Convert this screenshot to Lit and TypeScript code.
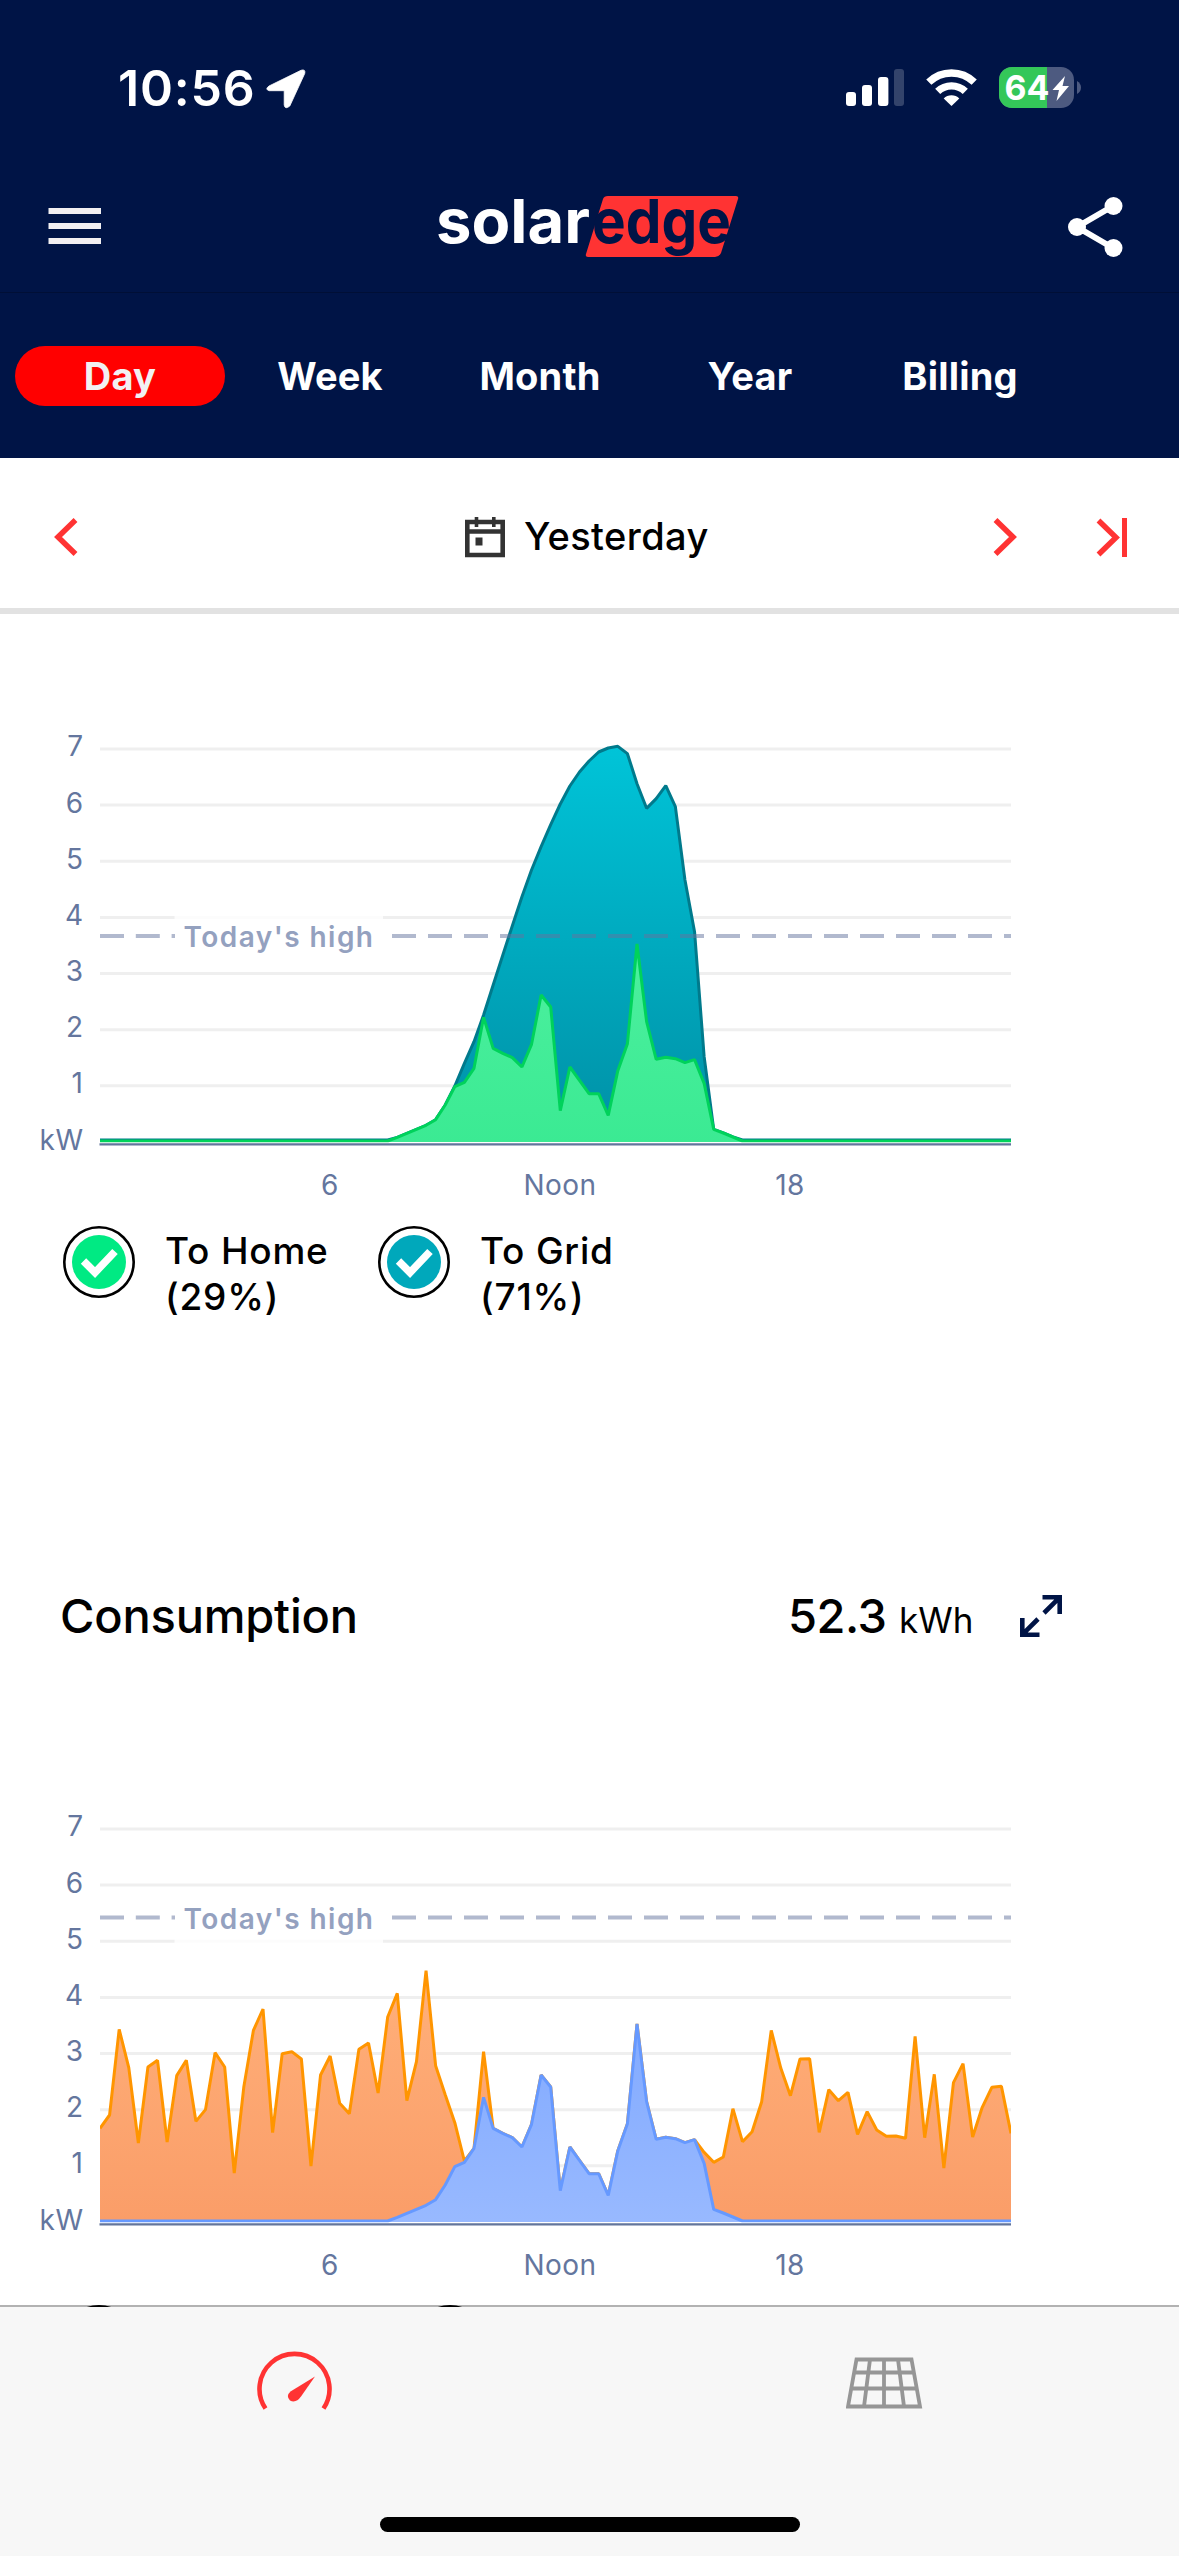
import { LitElement, html, svg, css } from "lit";
import { customElement, property } from "lit/decorators.js";

/* Quarter-hour readings, 96 per day. 168.4 counts are 1 kW. */
const COUNTS_PER_PX = 3;
const SAMPLES = 96;

const pad = (start: number, values: number[], idle: number): number[] => {
  const out = new Array<number>(SAMPLES).fill(idle);
  values.forEach((v, i) => (out[start + i] = v));
  return out;
};

const SELF_USE = pad(30, [
  3, 14, 26, 38, 50, 67, 111, 166, 179, 221, 374, 281, 266, 253, 225, 293, 441, 405, 94, 225, 185, 145, 145, 80,
  214, 295, 594, 361, 248, 254, 250, 238, 247, 176, 38, 27, 15, 3,
], 3);

const PRODUCTION = pad(30, [
  6, 14, 26, 38, 50, 67, 111, 168, 236, 301, 381, 471, 560, 649, 736, 816, 886, 952, 1014, 1068, 1110, 1143, 1170,
  1182, 1187, 1165, 1075, 1001, 1030, 1069, 1006, 786, 631, 256, 38, 27, 15, 6,
], 6);

const CONSUMPTION = [
  281, 321, 578, 463, 237, 465, 485, 240, 439, 485, 302, 337, 508, 465, 147, 406, 575, 639, 268, 505, 511, 489, 168,
  441, 498, 356, 325, 518, 537, 387, 615, 686, 364, 481, 754, 469, 382, 298, 183, 221, 511,
  ...SELF_USE.slice(41, 63),
  209, 179, 195, 340, 241, 271, 361, 575, 461, 379, 489, 490, 269, 397, 364, 389, 263, 331, 276, 257, 258, 251, 557,
  253, 443, 162, 418, 475, 255, 344, 404, 407, 266,
];

interface Series {
  id: string;
  values: number[];
  stroke: string;
  top: string;
  bottom: string;
}

/* Chart canvas: 1040 x 492, zero line at y = 422 and the 7 kW line at y = 29. */
const LEFT = 100;
const RIGHT = 1011;
const ZERO = 422;
const KW = 56.15;

@customElement("power-chart")
export class PowerChart extends LitElement {
  @property({ attribute: false }) series: Series[] = [];
  @property({ type: Number }) high = 0;

  static styles = css`
    :host { display: block; height: 492px; }
    .canvas { display: block; }
    .axis { font: 400 28px Inter, "Liberation Sans", sans-serif; fill: #64769e; letter-spacing: 0.5px; }
    .high { font: 600 28px Inter, "Liberation Sans", sans-serif; fill: #94a1bf; }
  `;

  private line(values: number[]) {
    const step = (RIGHT - LEFT) / (SAMPLES - 1);
    return values
      .map((v, i) => `${(LEFT + i * step).toFixed(2)},${(ZERO - v / COUNTS_PER_PX).toFixed(2)}`)
      .join(" ");
  }

  render() {
    const rows = [0, 1, 2, 3, 4, 5, 6, 7];
    const hours: [number, string][] = [[330, "6"], [560, "Noon"], [790, "18"]];
    const y = this.high;
    return html`
      <svg class="canvas" width="1040" height="492" viewBox="0 0 1040 492">
        <defs>
          <clipPath id="plot"><rect x="100" y="0" width="911" height="422.4"></rect></clipPath>
          ${this.series.map(
            (s) => svg`<linearGradient id=${s.id} x1="0" y1="0" x2="0" y2="1">
              <stop offset="0" stop-color=${s.top}></stop><stop offset="1" stop-color=${s.bottom}></stop>
            </linearGradient>`,
          )}
        </defs>
        ${rows.slice(1).map(
          (n) => svg`<line x1="100" x2="1011" y1=${ZERO - n * KW} y2=${ZERO - n * KW} stroke="#efefef" stroke-width="3"></line>`,
        )}
        <g clip-path="url(#plot)">
          ${this.series.map(
            (s) => svg`
              <polygon points="100,422 ${this.line(s.values)} 1011,422" fill="url(#${s.id})"></polygon>
              <polyline points=${this.line(s.values)} fill="none" stroke=${s.stroke} stroke-width="3" stroke-linejoin="bevel"></polyline>`,
          )}
        </g>
        <line x1="99.5" x2="1011" y1="424.3" y2="424.3" stroke="#62759c" stroke-width="2.2"></line>
        <rect x="174.5" y=${y - 22} width="208.5" height="50" fill="#fff" opacity="0.8"></rect>
        <g stroke="#64749e" stroke-opacity="0.5" stroke-width="4">
          <line x1="100" x2="175" y1=${y} y2=${y} stroke-dasharray="24 11.8"></line>
          <line x1="392" x2="1011" y1=${y} y2=${y} stroke-dasharray="24 12"></line>
        </g>
        <text class="high" x="183.5" y=${y + 11} textLength="189.5">Today's high</text>
        ${rows.map(
          (n) => svg`<text class="axis" x="83.5" y=${ZERO - n * KW + 7.5} text-anchor="end">${n === 0 ? "kW" : n}</text>`,
        )}
        ${hours.map(([x, label]) => svg`<text class="axis" x=${x} y="475" text-anchor="middle">${label}</text>`)}
      </svg>
    `;
  }
}

@customElement("legend-item")
export class LegendItem extends LitElement {
  @property() name = "";
  @property() share = "";
  @property() color = "";

  static styles = css`
    :host { display: flex; gap: 30px; height: 96px; color: #000; }
    .mark { flex: none; display: block; }
    .label { font: 500 37px/46px Inter, "Liberation Sans", sans-serif; padding-top: 2px; letter-spacing: 0.8px; white-space: nowrap; }
  `;

  render() {
    return html`
      <svg class="mark" width="72" height="72" viewBox="0 0 72 72">
        <circle cx="36" cy="36" r="34.7" fill="#fff" stroke="#000" stroke-width="2.6"></circle>
        <circle cx="36" cy="36" r="27" fill=${this.color}></circle>
        <path d="M20.5 35 L32 46.5 L52 25.5" fill="none" stroke="#fff" stroke-width="7.6"></path>
      </svg>
      <div class="label"><div>${this.name}</div><div>${this.share}</div></div>
    `;
  }
}

@customElement("app-root")
export class AppRoot extends LitElement {
  static styles = css`
    :host {
      display: flex; flex-direction: column; width: 1179px; height: 2556px; overflow: hidden;
      background: #fff; color: #000; font-family: Inter, "Liberation Sans", sans-serif;
    }
    svg { display: block; flex: none; }
    .top { background: #001446; color: #fff; height: 458px; flex: none; }
    .status { display: flex; height: 176px; box-sizing: border-box; padding: 58px 97px 0 118px; align-items: flex-start; }
    .clock { font: 600 50px/60px Inter, sans-serif; letter-spacing: 0.8px; width: 148px; }
    .arrow { margin-top: 11px; }
    .spacer { flex: 1; }
    .signal { margin: 11px 22px 0 0; }
    .wifi { margin: 11px 22px 0 0; }
    .battery { margin-top: 9px; }
    .cell { font: 700 34px Inter, sans-serif; fill: #fff; }
    .brand { display: flex; align-items: center; justify-content: space-between; height: 117px; box-sizing: border-box; padding: 0 56px 14px 48px; border-bottom: 1px solid #000f36; }
    .menu { margin-bottom: 2px; }
    .logo { margin: -14px -5px -14px 2px; }
    .wordmark { font: 700 61px Inter, sans-serif; }
    .tabs { display: flex; padding: 53px 0 0 15px; }
    .tab { width: 210px; height: 60px; border-radius: 30px; font: 700 38px/61px Inter, sans-serif; text-align: center; letter-spacing: 0.2px; }
    .tab.active { background: #f00; color: #f2f0f2; }
    .period { display: flex; align-items: center; height: 156px; box-sizing: border-box; border-bottom: 6px solid #e2e2e2; padding: 8px 52px 0 54px; flex: none; }
    .period .title { font: 500 38px/46px Inter, sans-serif; letter-spacing: 0.4px; margin-left: 19px; width: 471px; padding-bottom: 2px; }
    .back { margin-right: 387px; }
    .next { margin-right: 79px; }
    .content { flex: 1; min-height: 0; overflow: hidden; display: flex; flex-direction: column; }
    .first { margin-top: 106px; flex: none; }
    .legend { display: flex; padding-left: 63px; margin-top: 14px; flex: none; }
    .legend legend-item { width: 315px; }
    .legend.wide { margin-top: 13px; }
    .legend.wide legend-item { width: 351px; }
    .summary { display: flex; align-items: baseline; margin-top: 264px; padding: 0 0 0 60px; height: 60px; line-height: 60px; flex: none; }
    .heading { font-size: 47px; font-weight: 500; letter-spacing: -0.2px; width: 728px; }
    .amount { font-size: 47px; font-weight: 500; width: 111px; letter-spacing: -0.5px; }
    .unit { font-size: 35px; width: 121px; }
    .expand { align-self: flex-start; margin-top: 9px; }
    .second { margin-top: 154px; flex: none; }
    .tabbar { position: relative; flex: none; height: 251px; margin-top: -2px; box-sizing: border-box; background: #f7f7f7; border-top: 2px solid rgba(0, 0, 0, 0.3); background-clip: padding-box; display: flex; flex-direction: column; align-items: center; }
    .items { display: flex; width: 100%; height: 210px; }
    .items svg { margin-top: 43px; }
    .item { flex: 1; display: flex; justify-content: center; }
    .home { width: 420px; height: 15px; border-radius: 8px; background: #000; flex: none; }
  `;

  private produced: Series[] = [
    { id: "grid", values: PRODUCTION, stroke: "#007a8c", top: "#00c4d8", bottom: "#0090a6" },
    { id: "home", values: SELF_USE, stroke: "#00d25b", top: "#4df09f", bottom: "#3bea93" },
  ];

  private used: Series[] = [
    { id: "import", values: CONSUMPTION, stroke: "#ff9500", top: "#ffb07a", bottom: "#fa9d68" },
    { id: "solar", values: SELF_USE, stroke: "#6699ff", top: "#82aaff", bottom: "#98b9ff" },
  ];

  render() {
    const tabs = ["Day", "Week", "Month", "Year", "Billing"];
    return html`
      <header class="top">
        <div class="status">
          <div class="clock">10:56</div>
          <svg class="arrow" width="40" height="40" viewBox="0 0 40 40">
            <path d="M3 17 L35 1.3 Q39.8 -.2 38.7 4.6 L23.8 37 Q19 41 18.2 36 V21.7 H3.2 Q-1.5 20.5 3 17Z" fill="#fff" stroke="#fff" stroke-width=".8"></path>
          </svg>
          <div class="spacer"></div>
          <svg class="signal" width="58" height="37" viewBox="0 0 58 37" fill="#fff">
            <rect x="0" y="23" width="10" height="14" rx="3"></rect>
            <rect x="16" y="16" width="10" height="21" rx="3"></rect>
            <rect x="32" y="8" width="10.4" height="29" rx="3"></rect>
            <rect x="48" y="0" width="10" height="37" rx="3" opacity=".2"></rect>
          </svg>
          <svg class="wifi" width="51" height="37" viewBox="0 0 51 37" fill="none" stroke="#fff" stroke-width="7.4">
            <path d="M2.8 13.2 A32.5 32.5 0 0 1 48.2 13.2"></path>
            <path d="M11.7 22.4 A20 20 0 0 1 39.3 22.4"></path>
            <path d="M25.5 37 L17.7 29.4 A11 11 0 0 1 33.3 29.4Z" fill="#fff" stroke="none"></path>
          </svg>
          <svg class="battery" width="83" height="41" viewBox="0 0 83 41">
            <defs><clipPath id="cell"><rect width="75" height="41" rx="13"></rect></clipPath></defs>
            <g clip-path="url(#cell)"><rect width="75" height="41" fill="#4d5a80"></rect><rect width="48" height="41" fill="#34c759"></rect></g>
            <path d="M78 14 Q82 16.5 82 20.5 Q82 24.5 78 27Z" fill="#4d5a80"></path>
            <text class="cell" x="5.5" y="32.6" textLength="45" lengthAdjust="spacingAndGlyphs">64</text>
            <path d="M66 9 L53.5 23 H60 L57.5 34 L70 19 H63.5Z" fill="#fff"></path>
          </svg>
        </div>
        <div class="brand">
          <svg class="menu" width="53" height="36" viewBox="0 0 53 36" fill="#f2f0f2">
            <rect x=".5" width="52.5" height="6"></rect><rect x=".5" y="15" width="52.5" height="6"></rect><rect x=".5" y="30" width="52.5" height="6"></rect>
          </svg>
          <svg class="logo" width="302" height="90" viewBox="0 -14 302 90">
            <path d="M171 0 H299 Q302 0 301 3 L284 57 Q282 61 278 61 H151 Q148 61 149 58 L166 3 Q167 0 171 0Z" fill="#f33"></path>
            <text class="wordmark" x="-1" y="47" fill="#fff" textLength="154" lengthAdjust="spacingAndGlyphs">solar</text>
            <text class="wordmark" x="155" y="47" fill="#001446" textLength="139" lengthAdjust="spacingAndGlyphs">edge</text>
          </svg>
          <svg class="share" width="55" height="60" viewBox="0 0 55 60" fill="#fff">
            <path d="M45 9 L9 30 L45 51" fill="none" stroke="#fff" stroke-width="6"></path>
            <circle cx="9" cy="30" r="9"></circle><circle cx="45.500" cy="9" r="9"></circle><circle cx="45.500" cy="51" r="9"></circle>
          </svg>
        </div>
        <nav class="tabs">
          ${tabs.map((t, i) => html`<div class="tab ${i === 0 ? "active" : ""}">${t}</div>`)}
        </nav>
      </header>

      <div class="period">
        <svg class="back" width="24" height="38" viewBox="0 0 24 38" fill="none" stroke="#f33" stroke-width="5.500"><path d="M21.500 2 L4 19 L21.500 36"></path></svg>
        <svg width="40" height="41" viewBox="0 0 40 41" fill="none" stroke="#333">
          <path d="M2.300 5 H37.700 V38 H2.300Z" stroke-width="4.600"></path>
          <path d="M0 14.500 H40" stroke-width="4.500"></path>
          <path d="M11.500 0 V10 M28.800 0 V10" stroke-width="3.600"></path>
          <path d="M10.500 20.500 h7 v8 h-7z" fill="#333" stroke="none"></path>
        </svg>
        <div class="title">Yesterday</div>
        <svg class="next" width="24" height="38" viewBox="0 0 24 38" fill="none" stroke="#f33" stroke-width="5.500"><path d="M2.500 2 L20 19 L2.500 36"></path></svg>
        <svg width="31" height="39" viewBox="0 0 31 39" fill="none" stroke="#f33" stroke-width="5.500"><path d="M2.500 2.500 L20 19.500 L2.500 36.500"></path><path d="M28.500 0 V39" stroke-width="5"></path></svg>
      </div>

      <main class="content">
        <power-chart class="first" .series=${this.produced} .high=${216}></power-chart>
        <div class="legend">
          <legend-item name="To Home" share="(29%)" color="#00ea83"></legend-item>
          <legend-item name="To Grid" share="(71%)" color="#00a8bb"></legend-item>
        </div>
        <div class="summary">
          <div class="heading">Consumption</div>
          <div class="amount">52.3</div>
          <div class="unit">kWh</div>
          <svg class="expand" width="42" height="42" viewBox="0 0 42 42" fill="none" stroke="#001446" stroke-width="4.600">
            <path d="M22.500 2.300 H39.700 V19 M39.700 2.300 L24 18"></path>
            <path d="M19.500 39.700 H2.300 V23 M2.300 39.700 L18 24"></path>
          </svg>
        </div>
        <power-chart class="second" .series=${this.used} .high=${117.5}></power-chart>
        <div class="legend wide">
          <legend-item color="#6699ff"></legend-item>
          <legend-item color="#ff9500"></legend-item>
        </div>
      </main>

      <nav class="tabbar">
        <div class="items">
          <div class="item">
            <svg width="75" height="60" viewBox="0 -0.5 75 60">
              <path d="M8.500 58 A35 35 0 1 1 66.500 58" fill="none" stroke="#f33" stroke-width="4.600"></path>
              <path d="M58 26 L44 46 Q39 53 33 50 Q28.500 45.500 33.500 41Z" fill="#f33"></path>
            </svg>
          </div>
          <div class="item">
            <svg width="77" height="60" viewBox="0.5 -1 77 60" fill="none" stroke="#969696" stroke-width="3.800">
              <path d="M11 8.500 H66 L74.500 55.500 H2.500Z M9 21.500 H68 M6 37.500 H71 M24.500 8.500 L18.500 55.500 M38.500 8.500 V55.500 M52.500 8.500 L58.500 55.500"></path>
            </svg>
          </div>
        </div>
        <div class="home"></div>
      </nav>
    `;
  }
}
